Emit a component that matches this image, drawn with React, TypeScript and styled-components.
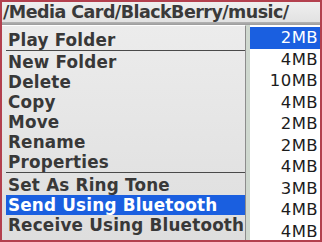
import styled, { createGlobalStyle } from "styled-components";

const GlobalStyle = createGlobalStyle`
  html, body {
    margin: 0;
    padding: 0;
    background: #ffffff;
  }
`;

const Frame = styled.div`
  position: relative;
  width: 322px;
  height: 242px;
  box-sizing: border-box;
  border: 2px solid #b3404e;
  overflow: hidden;
  background: #ffffff;
  font-family: "DejaVu Sans", "Liberation Sans", sans-serif;
`;

const Header = styled.div`
  height: 20px;
  line-height: 21px;
  padding-left: 1px;
  background: linear-gradient(#efefef, #e2e2e2);
  color: #3a3a3a;
  font-size: 17.5px;
  letter-spacing: -0.55px;
  font-weight: bold;
  white-space: nowrap;
`;

const HeaderRule = styled.div`
  height: 3px;
  background: linear-gradient(#b4b4b4, #9c9c9c);
`;

const List = styled.div`
  display: flex;
  flex-direction: column;
  padding-top: 2px;
`;

const SizeRow = styled.div<{ $active?: boolean }>`
  height: 21.5px;
  line-height: 22px;
  padding-right: 2px;
  text-align: right;
  font-size: 16.5px;
  letter-spacing: 0.4px;
  color: ${(p) => (p.$active ? "#ffffff" : "#1c1c1c")};
  background: ${(p) => (p.$active ? "#1a5fe0" : "transparent")};
`;

const Menu = styled.div`
  position: absolute;
  left: 0;
  top: 23px;
  bottom: 0;
  width: 244px;
  display: flex;
  flex-direction: column;
  padding: 4px 0 0 4px;
  box-sizing: border-box;
  border-top: 1px solid #ffffff;
  border-right: 1px solid #8c8c8c;
  background: linear-gradient(#ececec, #dedede);
  box-shadow: 4px 0 0 #cfd8cf;
`;

const Item = styled.div<{ $active?: boolean }>`
  height: 20px;
  line-height: 21px;
  padding-left: 2px;
  font-size: 16.8px;
  font-weight: bold;
  letter-spacing: 0.2px;
  white-space: nowrap;
  color: ${(p) => (p.$active ? "#ffffff" : "#383838")};
  background: ${(p) => (p.$active ? "#1a5fe0" : "transparent")};
`;

const Separator = styled.div<{ $space: number }>`
  height: ${(p) => p.$space}px;
  border-top: 1px solid #4a4a4a;
  box-sizing: border-box;
`;

const sizes = ["2MB", "4MB", "10MB", "4MB", "2MB", "2MB", "4MB", "3MB", "4MB", "4MB"];

export default function App() {
  return (
    <>
      <GlobalStyle />
      <Frame>
        <Header>/Media Card/BlackBerry/music/</Header>
        <HeaderRule />
        <List>
          {sizes.map((s, i) => (
            <SizeRow key={i} $active={i === 0}>
              {s}
            </SizeRow>
          ))}
        </List>
        <Menu>
          <Item>Play Folder</Item>
          <Separator $space={2} />
          <Item>New Folder</Item>
          <Item>Delete</Item>
          <Item>Copy</Item>
          <Item>Move</Item>
          <Item>Rename</Item>
          <Item>Properties</Item>
          <Separator $space={3} />
          <Item>Set As Ring Tone</Item>
          <Item $active>Send Using Bluetooth</Item>
          <Item>Receive Using Bluetooth</Item>
        </Menu>
      </Frame>
    </>
  );
}
